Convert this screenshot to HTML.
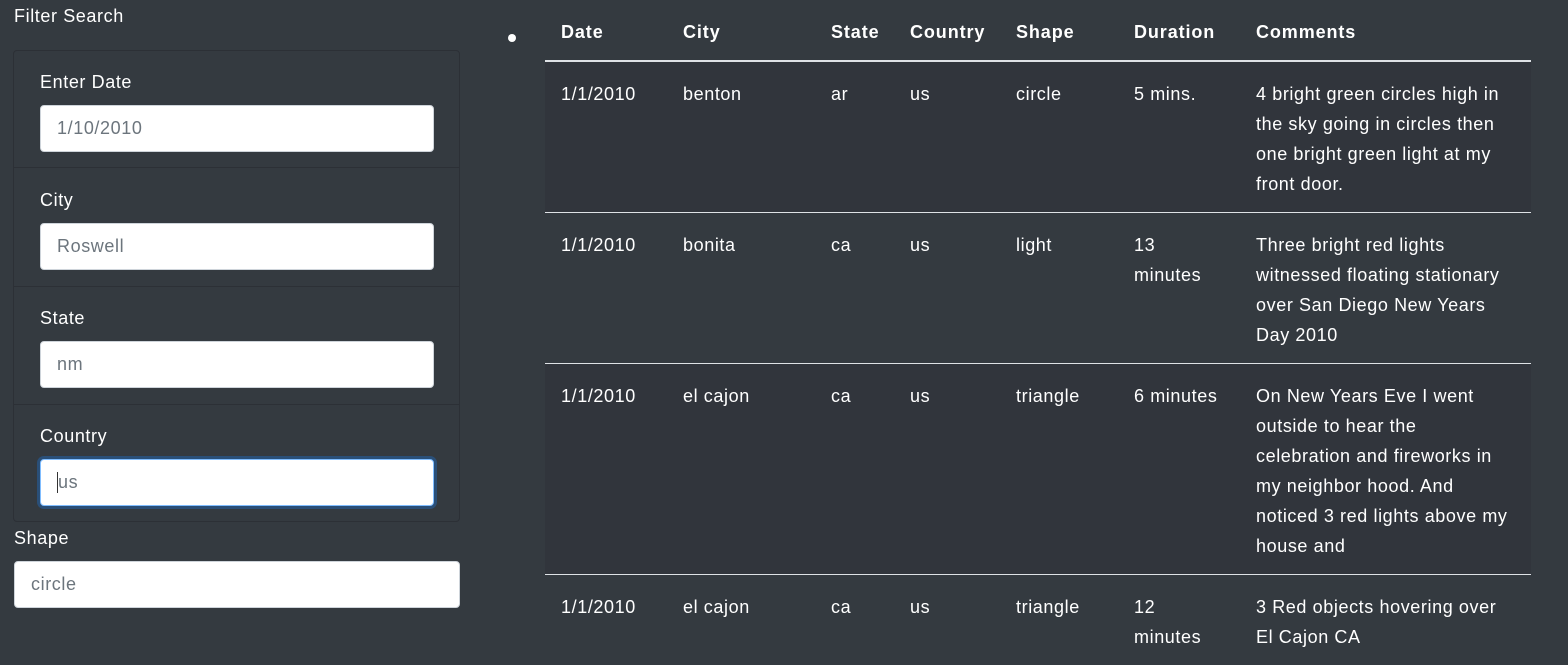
<!DOCTYPE html>
<html><head><style>
*{box-sizing:border-box;margin:0;padding:0}
body{width:1568px;height:642px;overflow:hidden;background:#343a40;color:#fff;font-family:"Liberation Sans",sans-serif;font-size:18px;position:relative;letter-spacing:0.6px}
.abs{position:absolute}
.inp{position:absolute;background:#fff;border:1px solid #ced4da;border-radius:4px;color:#6c757d;font-size:18px;padding-left:16px;display:flex;align-items:center}
.lbl{position:absolute;font-size:18px;line-height:22px}
.card{position:absolute;left:13px;top:50px;width:447px;height:472px;border:1px solid #2c3036;border-radius:4px}
.sep{position:absolute;left:14px;width:445px;height:1px;background:#2c3036}
table{position:absolute;left:545px;top:0;width:986px;border-collapse:collapse;font-size:18px;line-height:30px;table-layout:fixed}
th{text-align:left;font-weight:bold;padding:17px 16px 13px;border-bottom:2px solid #dee2e6;vertical-align:top;white-space:nowrap;letter-spacing:0.9px}
td{padding:17px 16px 13px;vertical-align:top;border-top:1px solid #dee2e6;white-space:nowrap}
tbody tr:nth-child(odd){background:#31353c}
tbody tr:first-child td{border-top:none}
</style></head><body>
<div class="lbl" style="left:14px;top:5px">Filter Search</div>
<div class="abs" style="left:508px;top:34px;width:8px;height:8px;border-radius:50%;background:#fff"></div>
<div class="card"></div>
<div class="sep" style="top:167px"></div>
<div class="sep" style="top:286px"></div>
<div class="sep" style="top:404px"></div>
<div class="lbl" style="left:40px;top:71px">Enter Date</div>
<div class="inp" style="left:40px;top:105px;width:394px;height:47px">1/10/2010</div>
<div class="lbl" style="left:40px;top:189px">City</div>
<div class="inp" style="left:40px;top:223px;width:394px;height:47px">Roswell</div>
<div class="lbl" style="left:40px;top:307px">State</div>
<div class="inp" style="left:40px;top:341px;width:394px;height:47px">nm</div>
<div class="lbl" style="left:40px;top:425px">Country</div>
<div class="inp" style="left:40px;top:459px;width:394px;height:47px;border:1px solid #80bdff;box-shadow:0 0 0 3px #2a4f78"><span style="border-left:1px solid #333;padding-left:0">us</span></div>
<div class="lbl" style="left:14px;top:527px">Shape</div>
<div class="inp" style="left:14px;top:561px;width:446px;height:47px">circle</div>
<table>
<colgroup><col style="width:122px"><col style="width:148px"><col style="width:79px"><col style="width:106px"><col style="width:118px"><col style="width:122px"><col style="width:291px"></colgroup>
<thead><tr><th>Date</th><th>City</th><th>State</th><th>Country</th><th>Shape</th><th>Duration</th><th>Comments</th></tr></thead>
<tbody>
<tr><td>1/1/2010</td><td>benton</td><td>ar</td><td>us</td><td>circle</td><td>5 mins.</td><td>4 bright green circles high in<br>the sky going in circles then<br>one bright green light at my<br>front door.</td></tr>
<tr><td>1/1/2010</td><td>bonita</td><td>ca</td><td>us</td><td>light</td><td>13<br>minutes</td><td>Three bright red lights<br>witnessed floating stationary<br>over San Diego New Years<br>Day 2010</td></tr>
<tr><td>1/1/2010</td><td>el cajon</td><td>ca</td><td>us</td><td>triangle</td><td>6 minutes</td><td>On New Years Eve I went<br>outside to hear the<br>celebration and fireworks in<br>my neighbor hood. And<br>noticed 3 red lights above my<br>house and</td></tr>
<tr><td>1/1/2010</td><td>el cajon</td><td>ca</td><td>us</td><td>triangle</td><td>12<br>minutes</td><td>3 Red objects hovering over<br>El Cajon CA</td></tr>
</tbody></table>
</body></html>
